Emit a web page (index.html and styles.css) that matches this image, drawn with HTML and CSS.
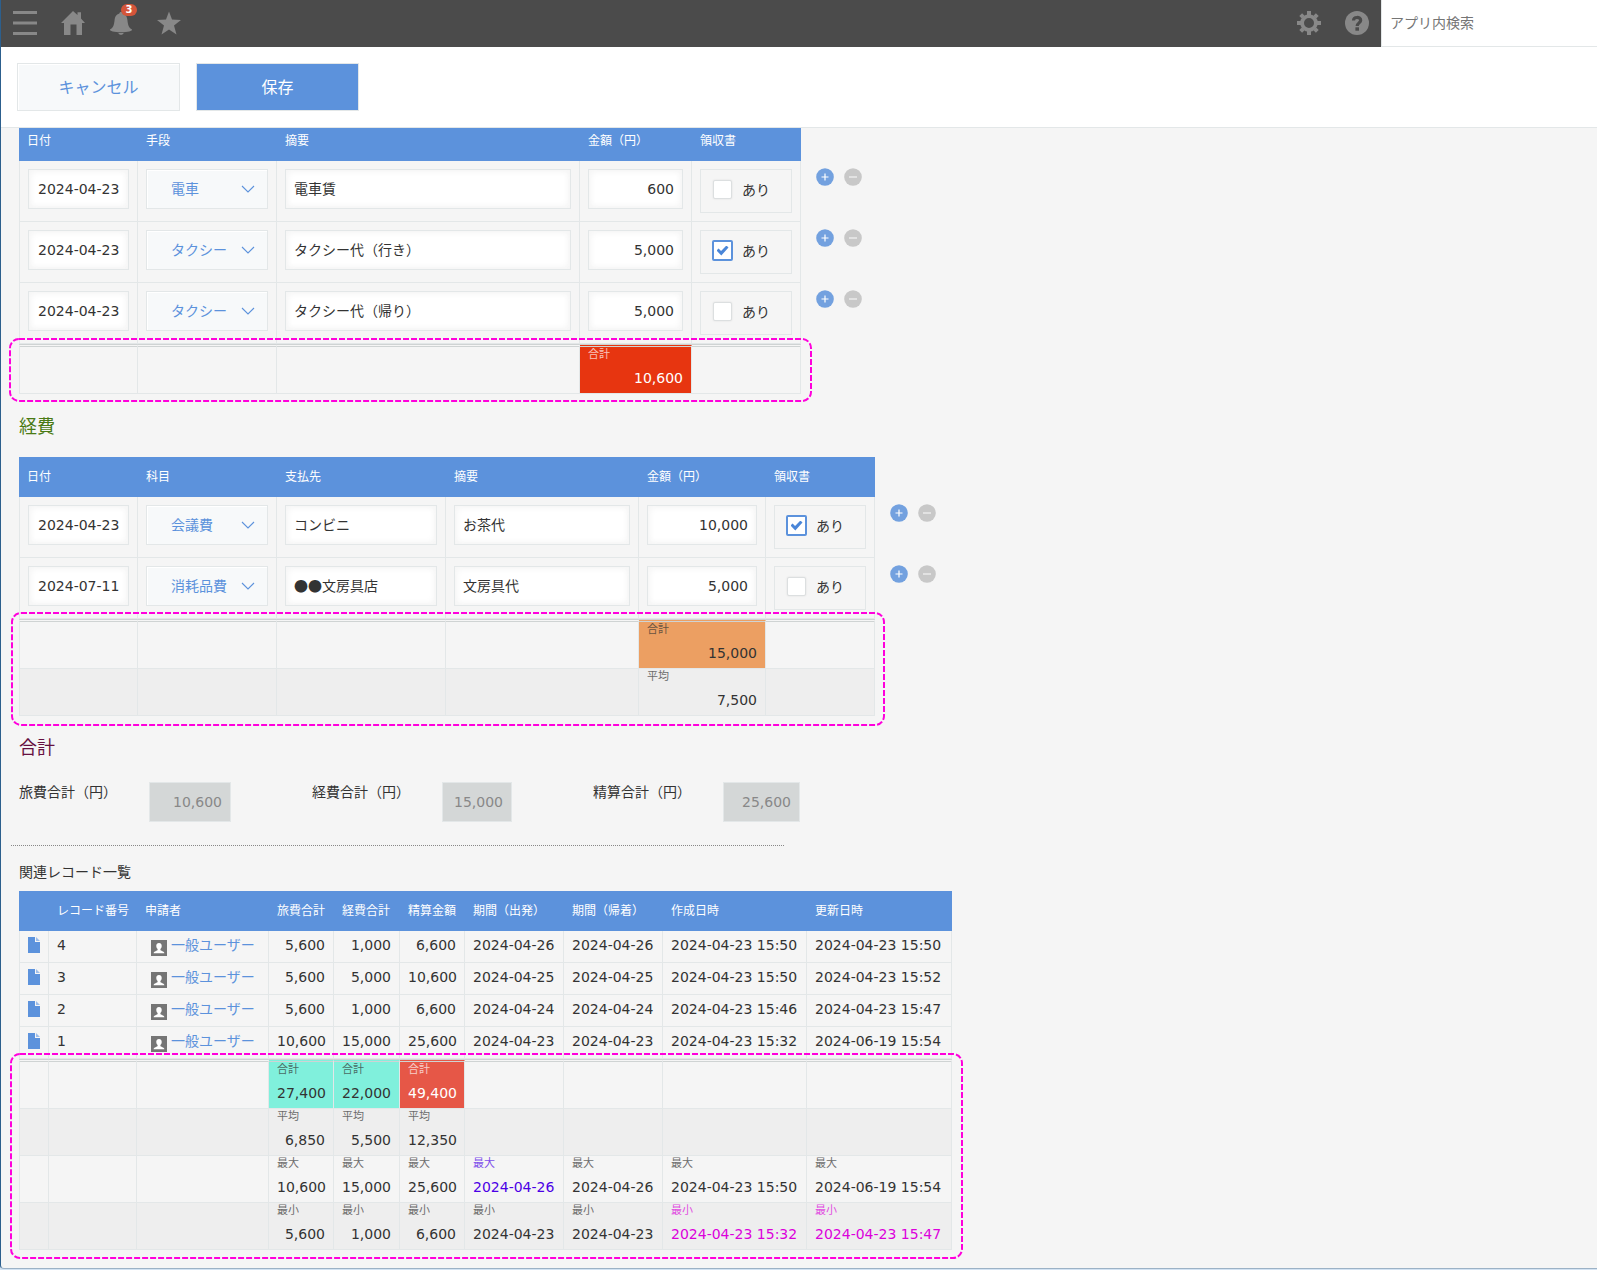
FILE: index.html
```html
<!DOCTYPE html>
<html lang="ja">
<head>
<meta charset="utf-8">
<title>経費精算</title>
<link rel="stylesheet" href="styles.css">
</head>
<body>
<svg class="defs" aria-hidden="true">
  <symbol id="chevron" viewBox="0 0 14 9"><path d="M1 1l6 6 6-6" fill="none" stroke="currentColor" stroke-width="1.1"/></symbol>
  <symbol id="plus" viewBox="0 0 18 18"><circle cx="9" cy="9" r="8.8" fill="#73a1df"/><path d="M5.500 9h7M9 5.500v7" stroke="#fff" stroke-width="1.2"/></symbol>
  <symbol id="minus" viewBox="0 0 18 18"><circle cx="9" cy="9" r="8.8" fill="#c8c8c8"/><path d="M5 9h8" stroke="#eee" stroke-width="1.4"/></symbol>
  <symbol id="doc" viewBox="0 0 12 16"><path d="M0 0h7v5h5v11H0z" fill="#5c92dc"/><path d="M8 0l4 4H8z" fill="#9dbdea"/></symbol>
  <symbol id="user" viewBox="0 0 16 16"><path d="M0 0h16v16H0z" fill="#757575"/><path d="M8 3c2 0 2.900 1.400 2.700 3.200-.1 1.300-.7 2.200-1.300 2.800v1c0 .8 3.900 1.300 4 3.300H2.600c.1-2 4-2.500 4-3.300V9C6 8.400 5.400 7.500 5.300 6.200 5.100 4.400 6 3 8 3z" fill="#fff"/></symbol>
</svg>
<div class="window">
  <header class="topbar">
    <nav class="nav">
      <button class="icon-button" type="button" aria-label="メニュー"><svg width="24" height="24" viewBox="0 0 24 24"><path d="M0 0h24v3H0zM0 10.500h24v3H0zM0 21h24v3H0z"/></svg></button>
      <button class="icon-button" type="button" aria-label="ホーム"><svg width="24" height="24" viewBox="0 0 24 24"><path d="M12 0l4.500 4V1.200h3.500V7.500l4 4.500h-3v12h-5.500V13.500h-6V24H3V12H0z"/></svg></button>
      <button class="icon-button" type="button" aria-label="通知"><svg width="24" height="24" viewBox="0 0 24 24"><path d="M12 1c1 0 1.600.7 1.600 1.600C17 3.500 18 6 18.400 9c.6 5 1.200 7.500 4.600 9.500.8 1.500-4.500 2.700-11 2.700S.2 20 1 18.500C4.400 16.500 5 14 5.600 9 6 6 7 3.500 10.400 2.600 10.400 1.700 11 1 12 1zM9.300 22h5.400c-.5 1.200-1.300 1.800-2.700 1.800S9.800 23.200 9.300 22z"/></svg><span class="badge">3</span></button>
      <button class="icon-button" type="button" aria-label="お気に入り"><svg width="24" height="24" viewBox="0 0 24 24"><path d="M12 .5l3 8.100 9 .4-7 5.400L19.500 23.500 12 18.500 4.500 23.500 7 14.400 0 9l9-.4z"/></svg></button>
    </nav>
    <div class="tools">
      <button class="icon-button" type="button" aria-label="設定"><svg width="24" height="24" viewBox="0 0 24 24"><g fill-rule="evenodd"><path d="M12 3.200a8.800 8.800 0 1 0 0 17.600 8.800 8.800 0 0 0 0-17.600zm0 3.800a5 5 0 1 1 0 10 5 5 0 0 1 0-10z"/></g><g fill="none" stroke="currentColor" stroke-width="4" stroke-linecap="butt"><path d="M12 0v4M12 20v4M0 12h4M20 12h4M3.700 3.700l2.500 2.500M17.800 17.800l2.500 2.500M20.300 3.700l-2.500 2.500M6.200 17.800l-2.500 2.500"/></g></svg></button>
      <button class="icon-button" type="button" aria-label="ヘルプ"><svg width="24" height="24" viewBox="0 0 24 24"><circle cx="12" cy="12" r="12"/><path d="M8.500 9.500C8.500 5.500 15.700 5.500 15.700 9.300 15.700 11.800 12.200 12 12.200 15" fill="none" stroke="#4b4b4b" stroke-width="3.200"/><path d="M10.400 16.300H14v3.400h-3.600z" fill="#4b4b4b"/></svg></button>
    </div>
    <input class="search" type="search" placeholder="アプリ内検索" aria-label="アプリ内検索">
  </header>
  <div class="toolbar">
    <button class="btn" type="button">キャンセル</button>
    <button class="btn btn-primary" type="button">保存</button>
  </div>
  <main class="content">
    <div class="table-wrap scrolled">
      <table class="grid">
        <colgroup><col class="w-date"><col class="w-kind"><col class="w-note-long"><col class="w-amount"><col class="w-receipt"><col class="w-actions"></colgroup>
        <thead><tr><th>日付</th><th>手段</th><th>摘要</th><th>金額（円）</th><th>領収書</th></tr></thead>
        <tbody>
          <tr>
            <td><input class="field date" value="2024-04-23" aria-label="日付"></td>
            <td><div class="dropdown"><select aria-label="手段"><option>電車</option><option>タクシー</option></select><svg><use href="#chevron"/></svg></div></td>
            <td><input class="field text" value="電車賃" aria-label="摘要"></td>
            <td><input class="field num" value="600" aria-label="金額（円）"></td>
            <td><label class="check"><input type="checkbox">あり</label></td>
            <td class="actions"><div class="row-actions"><button type="button" aria-label="行を追加"><svg><use href="#plus"/></svg></button><button type="button" aria-label="行を削除"><svg><use href="#minus"/></svg></button></div></td>
          </tr>
          <tr>
            <td><input class="field date" value="2024-04-23" aria-label="日付"></td>
            <td><div class="dropdown"><select aria-label="手段"><option>タクシー</option><option>電車</option></select><svg><use href="#chevron"/></svg></div></td>
            <td><input class="field text" value="タクシー代（行き）" aria-label="摘要"></td>
            <td><input class="field num" value="5,000" aria-label="金額（円）"></td>
            <td><label class="check"><input type="checkbox" checked>あり</label></td>
            <td class="actions"><div class="row-actions"><button type="button" aria-label="行を追加"><svg><use href="#plus"/></svg></button><button type="button" aria-label="行を削除"><svg><use href="#minus"/></svg></button></div></td>
          </tr>
          <tr>
            <td><input class="field date" value="2024-04-23" aria-label="日付"></td>
            <td><div class="dropdown"><select aria-label="手段"><option>タクシー</option><option>電車</option></select><svg><use href="#chevron"/></svg></div></td>
            <td><input class="field text" value="タクシー代（帰り）" aria-label="摘要"></td>
            <td><input class="field num" value="5,000" aria-label="金額（円）"></td>
            <td><label class="check"><input type="checkbox">あり</label></td>
            <td class="actions"><div class="row-actions"><button type="button" aria-label="行を追加"><svg><use href="#plus"/></svg></button><button type="button" aria-label="行を削除"><svg><use href="#minus"/></svg></button></div></td>
          </tr>
        </tbody>
        <tfoot>
          <tr><td></td><td></td><td></td><td class="num red"><small>合計</small>10,600</td><td></td></tr>
        </tfoot>
      </table>
      <svg class="highlight highlight-travel" aria-hidden="true"><rect/></svg>
    </div>

    <h2 class="heading green">経費</h2>
    <div class="table-wrap">
      <table class="grid">
        <colgroup><col class="w-date"><col class="w-kind"><col class="w-payee"><col class="w-note"><col class="w-amount-wide"><col class="w-receipt"><col class="w-actions"></colgroup>
        <thead><tr><th>日付</th><th>科目</th><th>支払先</th><th>摘要</th><th>金額（円）</th><th>領収書</th></tr></thead>
        <tbody>
          <tr>
            <td><input class="field date" value="2024-04-23" aria-label="日付"></td>
            <td><div class="dropdown"><select aria-label="科目"><option>会議費</option><option>消耗品費</option></select><svg><use href="#chevron"/></svg></div></td>
            <td><input class="field text" value="コンビニ" aria-label="支払先"></td>
            <td><input class="field text" value="お茶代" aria-label="摘要"></td>
            <td><input class="field num" value="10,000" aria-label="金額（円）"></td>
            <td><label class="check"><input type="checkbox" checked>あり</label></td>
            <td class="actions"><div class="row-actions"><button type="button" aria-label="行を追加"><svg><use href="#plus"/></svg></button><button type="button" aria-label="行を削除"><svg><use href="#minus"/></svg></button></div></td>
          </tr>
          <tr>
            <td><input class="field date" value="2024-07-11" aria-label="日付"></td>
            <td><div class="dropdown"><select aria-label="科目"><option>消耗品費</option><option>会議費</option></select><svg><use href="#chevron"/></svg></div></td>
            <td><input class="field text" value="●●文房具店" aria-label="支払先"></td>
            <td><input class="field text" value="文房具代" aria-label="摘要"></td>
            <td><input class="field num" value="5,000" aria-label="金額（円）"></td>
            <td><label class="check"><input type="checkbox">あり</label></td>
            <td class="actions"><div class="row-actions"><button type="button" aria-label="行を追加"><svg><use href="#plus"/></svg></button><button type="button" aria-label="行を削除"><svg><use href="#minus"/></svg></button></div></td>
          </tr>
        </tbody>
        <tfoot>
          <tr><td></td><td></td><td></td><td></td><td class="num orange"><small>合計</small>15,000</td><td></td></tr>
          <tr><td></td><td></td><td></td><td></td><td class="num"><small>平均</small>7,500</td><td></td></tr>
        </tfoot>
      </table>
      <svg class="highlight highlight-expense" aria-hidden="true"><rect/></svg>
    </div>

    <h2 class="heading purple">合計</h2>
    <div class="totals">
      <div class="total"><label for="t1">旅費合計（円）</label><input id="t1" class="total-a" value="10,600" disabled></div>
      <div class="total"><label for="t2">経費合計（円）</label><input id="t2" class="total-b" value="15,000" disabled></div>
      <div class="total"><label for="t3">精算合計（円）</label><input id="t3" class="total-c" value="25,600" disabled></div>
    </div>
    <hr class="rule">
    <h3 class="caption">関連レコード一覧</h3>
    <div class="table-wrap">
      <table class="grid related">
        <colgroup><col class="w-icon"><col class="w-id"><col class="w-user"><col class="w-sum"><col class="w-sum-wide"><col class="w-sum"><col class="w-day"><col class="w-day"><col class="w-time"><col class="w-time-wide"></colgroup>
        <thead><tr><th></th><th>レコード番号</th><th>申請者</th><th>旅費合計</th><th>経費合計</th><th>精算金額</th><th>期間（出発）</th><th>期間（帰着）</th><th>作成日時</th><th>更新日時</th></tr></thead>
        <tbody>
          <tr><td><a class="doc" href="#" aria-label="レコード4"><svg><use href="#doc"/></svg></a></td><td>4</td><td><a class="user" href="#"><svg><use href="#user"/></svg>一般ユーザー</a></td><td class="num">5,600</td><td class="num">1,000</td><td class="num">6,600</td><td>2024-04-26</td><td>2024-04-26</td><td>2024-04-23 15:50</td><td>2024-04-23 15:50</td></tr>
          <tr><td><a class="doc" href="#" aria-label="レコード3"><svg><use href="#doc"/></svg></a></td><td>3</td><td><a class="user" href="#"><svg><use href="#user"/></svg>一般ユーザー</a></td><td class="num">5,600</td><td class="num">5,000</td><td class="num">10,600</td><td>2024-04-25</td><td>2024-04-25</td><td>2024-04-23 15:50</td><td>2024-04-23 15:52</td></tr>
          <tr><td><a class="doc" href="#" aria-label="レコード2"><svg><use href="#doc"/></svg></a></td><td>2</td><td><a class="user" href="#"><svg><use href="#user"/></svg>一般ユーザー</a></td><td class="num">5,600</td><td class="num">1,000</td><td class="num">6,600</td><td>2024-04-24</td><td>2024-04-24</td><td>2024-04-23 15:46</td><td>2024-04-23 15:47</td></tr>
          <tr><td><a class="doc" href="#" aria-label="レコード1"><svg><use href="#doc"/></svg></a></td><td>1</td><td><a class="user" href="#"><svg><use href="#user"/></svg>一般ユーザー</a></td><td class="num">10,600</td><td class="num">15,000</td><td class="num">25,600</td><td>2024-04-23</td><td>2024-04-23</td><td>2024-04-23 15:32</td><td>2024-06-19 15:54</td></tr>
        </tbody>
        <tfoot>
          <tr><td></td><td></td><td></td><td class="num mint"><small>合計</small>27,400</td><td class="num mint"><small>合計</small>22,000</td><td class="num coral"><small>合計</small>49,400</td><td></td><td></td><td></td><td></td></tr>
          <tr><td></td><td></td><td></td><td class="num"><small>平均</small>6,850</td><td class="num"><small>平均</small>5,500</td><td class="num"><small>平均</small>12,350</td><td></td><td></td><td></td><td></td></tr>
          <tr><td></td><td></td><td></td><td class="num"><small>最大</small>10,600</td><td class="num"><small>最大</small>15,000</td><td class="num"><small>最大</small>25,600</td><td class="indigo"><small>最大</small>2024-04-26</td><td><small>最大</small>2024-04-26</td><td><small>最大</small>2024-04-23 15:50</td><td><small>最大</small>2024-06-19 15:54</td></tr>
          <tr><td></td><td></td><td></td><td class="num"><small>最小</small>5,600</td><td class="num"><small>最小</small>1,000</td><td class="num"><small>最小</small>6,600</td><td><small>最小</small>2024-04-23</td><td><small>最小</small>2024-04-23</td><td class="magenta"><small>最小</small>2024-04-23 15:32</td><td class="magenta"><small>最小</small>2024-04-23 15:47</td></tr>
        </tfoot>
      </table>
      <svg class="highlight highlight-related" aria-hidden="true"><rect/></svg>
    </div>
  </main>
</div>
</body>
</html>
```

FILE: styles.css
```css
* { box-sizing: border-box; }

html { background: #d3e3f3; }

body {
  margin: 0;
  color: #333;
  font-family: "DejaVu Sans", "Noto Sans CJK JP", sans-serif;
  font-size: 14px;
  line-height: 20px;
}

button, input, select { font: inherit; color: inherit; margin: 0; }

.defs { position: absolute; width: 0; height: 0; }

.window {
  min-height: calc(100vh - 1px);
  background: #f5f5f5;
  border-left: 1px solid #2c5f8d;
  border-bottom: 1px solid #9cb2c6;
  border-bottom-left-radius: 4px;
}

/* Top bar */
.topbar { display: flex; height: 47px; background: #4b4b4b; }
.nav, .tools { display: flex; }
.nav { flex: 1; }
.icon-button {
  position: relative;
  display: flex;
  align-items: center;
  justify-content: center;
  width: 48px;
  padding: 0 0 1px;
  border: 0;
  background: none;
  color: #888;
  fill: currentColor;
}
.badge {
  position: absolute;
  top: 4px;
  left: 24px;
  width: 16px;
  height: 12px;
  border-radius: 6px;
  background: #d4553a;
  color: #fff;
  font-size: 10px;
  font-weight: bold;
  line-height: 12px;
}
.search {
  width: 216px;
  padding: 0 8px;
  border: 0 solid #e3e7e8;
  border-width: 0 0 1px 1px;
  border-radius: 0;
  background: #fff;
  appearance: none;
}
.search::placeholder { color: #757575; opacity: 1; }

/* Save and cancel */
.toolbar {
  display: flex;
  gap: 16px;
  padding: 16px;
  background: #fff;
  border-bottom: 1px solid #e3e7e8;
}
.btn {
  width: 163px;
  height: 48px;
  padding: 2px 0 0;
  border: 1px solid #e3e7e8;
  background: #f7f9fa;
  box-shadow: inset 1px 1px 0 #fff;
  color: #5c92dc;
  font-size: 16px;
}
.btn-primary { background: #5c92dc; box-shadow: none; color: #fff; }

.content { overflow: hidden; padding: 0 18px 18px; }

/* Tables */
.table-wrap { position: relative; width: fit-content; }
.scrolled { margin-top: -7px; }
.grid {
  width: 0;
  table-layout: fixed;
  border-collapse: separate;
  border-spacing: 0;
}
.w-date { width: 119px; }
.w-kind { width: 139px; }
.w-note-long { width: 303px; }
.w-amount { width: 112px; }
.w-receipt { width: 109px; }
.w-actions { width: 62px; }
.w-payee { width: 169px; }
.w-note { width: 193px; }
.w-amount-wide { width: 127px; }
.w-icon { width: 30px; }
.w-id { width: 88px; }
.w-user { width: 132px; }
.w-sum { width: 65px; }
.w-sum-wide { width: 66px; }
.w-day { width: 99px; }
.w-time { width: 144px; }
.w-time-wide { width: 145px; }

.grid th {
  height: 40px;
  padding: 0 8px;
  background: #5c92dc;
  color: #fff;
  font-size: 12px;
  font-weight: normal;
  text-align: left;
  white-space: nowrap;
}
.grid td {
  padding: 8px;
  border: 0 solid #e3e7e8;
  border-width: 0 1px 1px 0;
  vertical-align: top;
  white-space: nowrap;
}
.grid td:first-child { border-left-width: 1px; }
.grid .num { text-align: right; }
.grid .actions { padding: 7px 0 0 15px; border: 0; }

.related tbody td { height: 32px; padding: 4px 8px; }

.grid tfoot td { height: 47px; padding: 0 8px 5px; }
.grid tfoot tr:first-child td {
  height: 50px;
  border-top: 3px double #cfd3d3;
}
.grid tfoot tr:nth-child(even) td { background: #eee; }
.grid small {
  display: block;
  margin-bottom: 5px;
  font-size: 11px;
  line-height: 16px;
  text-align: left;
  opacity: .7;
}
.grid tfoot .red { background: #e73510; color: #fff; }
.grid tfoot .orange { background: #ec9f62; }
.grid tfoot .mint { background: #80f0dc; }
.grid tfoot .coral { background: #e65747; color: #fff; }
.indigo { color: #4b00e6; }
.magenta { color: #dc00dc; }

/* Form controls */
.field {
  display: block;
  width: 100%;
  height: 40px;
  padding: 0 8px;
  border: 1px solid #e3e7e8;
  background: #fff;
  box-shadow: inset 2px 2px 6px #f5f5f5, inset -2px -2px 6px #f5f5f5;
}
.date { padding-left: 9px; }
.text { padding-bottom: 2px; font-family: "Noto Sans CJK JP", sans-serif; }
.dropdown { display: grid; color: #5c92dc; }
.dropdown select {
  grid-area: 1 / 1;
  width: 100%;
  height: 40px;
  padding: 0 24px;
  border: 1px solid #e3e7e8;
  border-radius: 0;
  background: #f7f9fa;
  box-shadow: inset 1px 1px 0 #fff;
  appearance: none;
}
.dropdown svg {
  grid-area: 1 / 1;
  place-self: center end;
  width: 14px;
  height: 9px;
  margin-right: 13px;
  pointer-events: none;
}
.check {
  display: flex;
  align-items: center;
  gap: 9px;
  height: 44px;
  padding: 0 11px 3px;
  border: 1px solid #e3e7e8;
}
.check input {
  display: grid;
  place-items: center;
  width: 19px;
  height: 19px;
  margin: 0 1px;
  border: 1px solid #dcdfe0;
  border-radius: 2px;
  background: #fff;
  box-shadow: 0 0 2px #ddd;
  appearance: none;
}
.check input:checked {
  width: 21px;
  height: 21px;
  margin: 0;
  border: 2px solid #5c92dc;
  box-shadow: none;
}
.check input:checked::before {
  content: "";
  width: 12px;
  height: 10px;
  background: #4a86d8;
  clip-path: polygon(0 50%, 17% 30%, 38% 55%, 83% 0, 100% 20%, 40% 100%);
}
.row-actions { display: flex; gap: 10px; }
.row-actions button {
  width: 18px;
  height: 18px;
  padding: 0;
  border: 0;
  background: none;
}
.row-actions svg { display: block; width: 18px; height: 18px; }

.doc { display: block; padding-top: 2px; }
.doc svg { display: block; width: 12px; height: 16px; }
.user {
  display: flex;
  gap: 4px;
  padding-left: 6px;
  color: #5c92dc;
  text-decoration: none;
}
.user svg { width: 16px; height: 16px; margin-top: 5px; }

/* Dashed frames round the summary rows */
.highlight { position: absolute; overflow: visible; pointer-events: none; }
.highlight rect {
  width: calc(100% - 2px);
  height: calc(100% - 2px);
  x: 1px;
  y: 1px;
  rx: 9px;
  fill: none;
  stroke: #ff00dc;
  stroke-width: 2px;
  stroke-dasharray: 6 2;
}
.highlight-travel { left: -10px; bottom: -8px; width: calc(100% - 41px); height: 64px; }
.highlight-expense { left: -8px; bottom: -10px; width: calc(100% - 44px); height: 114px; }
.highlight-related { left: -9px; bottom: -9px; width: calc(100% + 20px); height: 206px; }

/* Sections */
.heading { margin: 20px 0 18px; font-size: 18px; font-weight: normal; line-height: 25px; }
.green { color: #4a7a14; }
.purple { margin: 19px 0 22px; color: #661040; }

.totals { display: flex; flex-wrap: wrap; gap: 81px; }
.total { display: flex; }
.total label { width: 130px; }
.total input {
  height: 40px;
  padding: 0 8px;
  border: 1px solid #e3e7e8;
  background: #d4d7d7;
  color: #888;
  text-align: right;
}
.total-a { width: 82px; }
.total-b { width: 70px; }
.total-c { width: 77px; }

.rule {
  width: 773px;
  margin: 23px 0 16px -8px;
  border: 0;
  border-top: 1px dotted #888;
}
.caption { margin: 0 0 9px; font-size: 14px; font-weight: normal; }
```
